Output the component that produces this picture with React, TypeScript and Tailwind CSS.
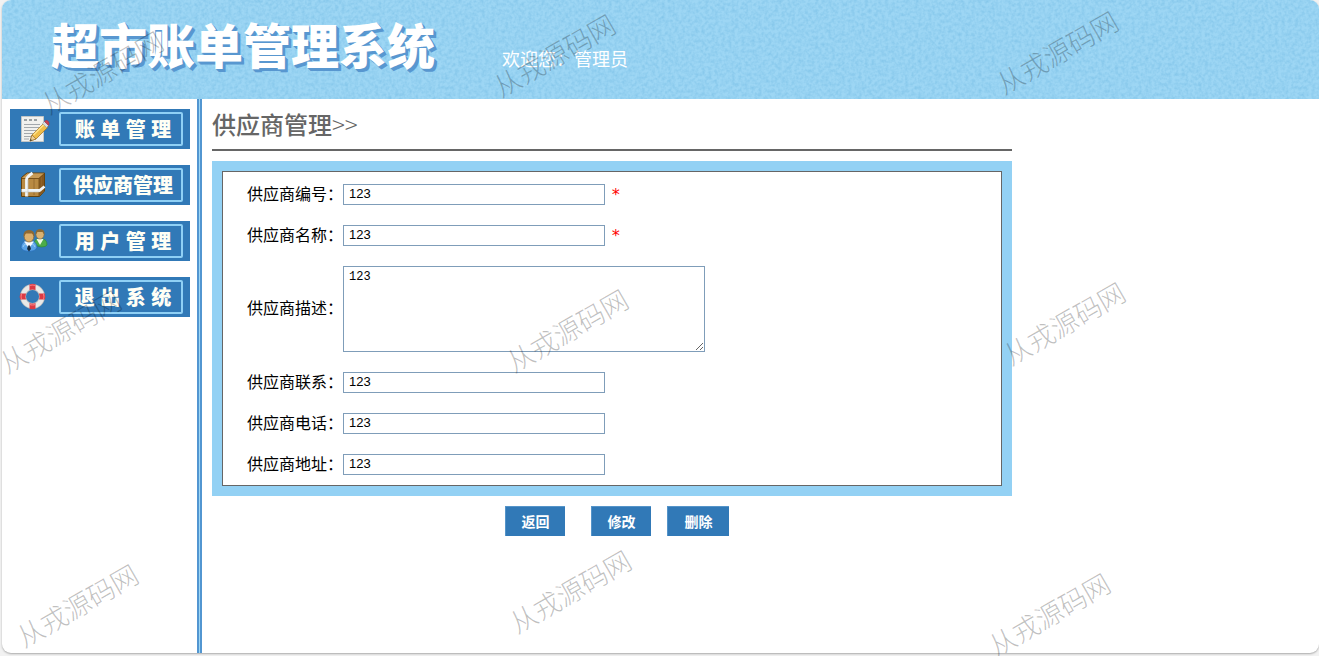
import { useState, type ReactNode } from "react";

function BillIcon() {
  return (
    <svg className="h-7 w-8 shrink-0" viewBox="0 0 32 28" aria-hidden="true">
      <path d="M2.5 1.5h22v25h-22z" fill="#f1f1ee" stroke="#c3c6c6" />
      <path d="M5 5h3M10 5h3M15 5h3" stroke="#7f868b" strokeWidth="1.6" />
      <path d="M5 9.5h16M5 12.5h16M5 15.5h13M5 18.5h10M5 21.5h7M5 24h5" stroke="#a3a8ac" />
      <path d="M11 26l2-6L24.500 8.500l4 4L17 24z" fill="#f0bd48" stroke="#a9782a" strokeWidth=".8" />
      <path d="M14.500 20L25.500 9" stroke="#ffe48c" strokeWidth="1.500" />
      <path d="M11 26l2-6 4 4z" fill="#edcf96" stroke="#8b6222" strokeWidth=".6" />
      <path d="M11 26l.7-2 1.300 1.300z" fill="#333" />
      <path d="M23.500 8.500l2-2 4 4-2 2z" fill="#d8dce0" stroke="#8795a2" strokeWidth=".5" />
      <path d="M25.500 6.500q1.500-2 3.500-.5 2 2 .5 4.500z" fill="#c8404f" stroke="#96344a" strokeWidth=".5" />
    </svg>
  );
}

function BoxIcon() {
  return (
    <svg className="h-7 w-8 shrink-0" viewBox="0 0 32 28" aria-hidden="true">
      <path d="M2.500 6.500L8 2h17.500v18l-5 5.500h-18z" fill="#a6752f" stroke="#62420f" />
      <path d="M3 7L8.200 2.500H25L20 7z" fill="#c69a56" />
      <path d="M3 7h17v18H3z" fill="#b98a42" />
      <path d="M20 7l5-4.500V20l-5 5z" fill="#85571f" />
      <path d="M3 7.500h17M20 7.500l5-4.500M20 7.500V25" fill="none" stroke="#7a5218" />
      <path d="M15 8v16M22.500 6v15" stroke="#91642b" strokeWidth=".8" />
      <path d="M7.500 25.500V8.500Q7.500 6 13.500 2M2.500 19.500h18l5-4" fill="none" stroke="#f1f5f7" strokeWidth="2.800" />
      <path d="M9 25.500V9M2.500 21h18" stroke="#bec4c7" strokeWidth=".6" />
    </svg>
  );
}

function UsersIcon() {
  return (
    <svg className="h-7 w-8 shrink-0" viewBox="0 0 32 28" aria-hidden="true">
      <path d="M15 18q0-6 4-6h4q5 0 5 6-1 2-6 2z" fill="#4cac48" stroke="#2b8a3a" strokeWidth=".7" />
      <path d="M17.500 12h7L21 18z" fill="#effbe6" />
      <ellipse cx="21" cy="7.500" rx="4" ry="4.600" fill="#d9b272" stroke="#8b6a35" strokeWidth=".6" />
      <path d="M16.500 8q-.5-6 4.500-6t4.500 6l-2-3h-5z" fill="#8a6a36" />
      <path d="M2 21q0-6 5-7h6q5 1 5 7-2 3.500-8 3.500T2 21z" fill="#5ba4e8" stroke="#2367b3" strokeWidth=".7" />
      <path d="M5 14.500l5 7 5-7z" fill="#f5faff" />
      <path d="M9 18.500h2l1 3.500-2 2.500L8 22z" fill="#172a3d" />
      <ellipse cx="10" cy="9.500" rx="4.800" ry="5.500" fill="#dcb06c" stroke="#8a6530" strokeWidth=".7" />
      <path d="M4.500 10Q4 3 10 3t5.500 7l-2.500-3.500H7z" fill="#8f6932" />
      <path d="M4 20q1-3 3-3M16 20q-1-3-3-3" stroke="#9acbf5" fill="none" />
    </svg>
  );
}

function LifebuoyIcon() {
  return (
    <svg className="h-7 w-8 shrink-0" viewBox="0 0 32 28" aria-hidden="true">
      <circle cx="13.500" cy="13.500" r="9.500" fill="none" stroke="#b7b9bb" strokeWidth="6" />
      <circle cx="13.500" cy="13.500" r="9.500" fill="none" stroke="#e9e9e7" strokeWidth="4.500" />
      <path d="M10.500 1.200q3-1 6 0V7q-3-1-6 0zM10.500 20q3 1 6 0v5.800q-3 1-6 0zM1.200 10.500q-1 3 0 6H7q-1-3 0-6zM20 10.500q1 3 0 6h5.800q1-3 0-6z" fill="#dc3a44" />
      <path d="M11 2.500q2.500-1 5 0M2.500 11q-1 2.500 0 5M24.500 11q1 2.500 0 5M11 21.500q2.500 1 5 0" fill="none" stroke="#f77c7f" strokeWidth="1.200" />
    </svg>
  );
}

const menu: { label: string; icon: ReactNode }[] = [
  { label: "账 单 管 理", icon: <BillIcon /> },
  { label: "供应商管理", icon: <BoxIcon /> },
  { label: "用 户 管 理", icon: <UsersIcon /> },
  { label: "退 出 系 统", icon: <LifebuoyIcon /> },
];

const fields = [
  { id: "code", label: "供应商编号：", required: true },
  { id: "name", label: "供应商名称：", required: true },
  { id: "description", label: "供应商描述：", multiline: true },
  { id: "contact", label: "供应商联系：" },
  { id: "phone", label: "供应商电话：" },
  { id: "address", label: "供应商地址：" },
];

const stamps = [
  "left-[102px] top-[72px]",
  "left-[554px] top-[55px]",
  "left-[1057px] top-[52px]",
  "left-[60px] top-[331px]",
  "left-[567px] top-[330px]",
  "left-[1064px] top-[323px]",
  "left-[77px] top-[605px]",
  "left-[570px] top-[591px]",
  "left-[1049px] top-[614px]",
];

function HeaderTexture() {
  return (
    <svg className="absolute inset-0 h-full w-full" aria-hidden="true">
      <filter id="paper" x="0" y="0" width="100%" height="100%" colorInterpolationFilters="sRGB">
        <feTurbulence type="fractalNoise" baseFrequency="0.3" numOctaves="2" seed="4" />
        <feColorMatrix values="0 0 0 0 0.4  0 0 0 0 0.7  0 0 0 0 0.87  0.8 0 0 0 -0.28" />
      </filter>
      <rect width="100%" height="100%" filter="url(#paper)" />
    </svg>
  );
}

function ActionButton({ children, wide = false }: { children: ReactNode; wide?: boolean }) {
  return (
    <button
      type="button"
      className={`h-[30px] border-t border-l border-[#5594c9] bg-[#3179b7] text-sm leading-5 font-bold text-white ${wide ? "w-[62px]" : "w-[60px]"}`}
    >
      {children}
    </button>
  );
}

export default function App() {
  const [values, setValues] = useState<Record<string, string>>(
    Object.fromEntries(fields.map((f) => [f.id, "123"])),
  );
  const update = (id: string, value: string) => setValues((v) => ({ ...v, [id]: value }));

  return (
    <div className="relative h-screen overflow-hidden bg-[#f2f2f2] pb-[3px] pl-0.5 font-['Liberation_Sans','Noto_Sans_CJK_SC',sans-serif]">
      <div className="flex h-full flex-col overflow-hidden rounded-[9px] bg-white shadow-[0_1px_2px_#aaaaaa]">
        <header className="relative flex h-[99px] shrink-0 items-start overflow-hidden bg-[#9dd6f4] pl-[49px]">
          <HeaderTexture />
          <h1 className="relative mt-3 text-[48px] leading-[72px] font-black whitespace-nowrap text-white [text-shadow:1px_1px_#5897d0,2px_2px_#5897d0,3px_3px_#5897d0]">
            超市账单管理系统
          </h1>
          <p className="relative mt-12 ml-[67px] text-lg leading-6 whitespace-nowrap text-white">
            欢迎您：管理员
          </p>
        </header>

        <div className="flex min-h-0 flex-1">
          <nav className="w-[195px] shrink-0 pt-2.5 pl-2">
            <ul className="flex flex-col gap-4">
              {menu.map((item) => (
                <li key={item.label}>
                  <a href="#" className="flex h-10 w-[180px] items-center bg-[#3179b7] pr-[7px] pl-[9px]">
                    {item.icon}
                    <span className="ml-2 flex h-[34px] flex-1 items-center justify-center rounded-xs border-2 border-[#8fd0f5] pt-0.5 pl-1 text-xl leading-5 font-black whitespace-nowrap text-[#fffff5]">
                      {item.label}
                    </span>
                  </a>
                </li>
              ))}
            </ul>
          </nav>
          <div className="w-[5px] shrink-0 border-x-2 border-[#5296d1] bg-[#9dd6f4]" />

          <main className="min-w-0 flex-1 pl-2.5">
            <div className="max-w-[800px]">
              <h2 className="h-[52px] border-b-2 border-[#666666] text-2xl leading-[50px] font-medium text-[#666666]">
                供应商管理<span className="font-['Noto_Sans_CJK_SC'] font-light">&gt;&gt;</span>
              </h2>
              <form onSubmit={(e) => e.preventDefault()}>
                <div className="mt-2.5 border-[10px] border-[#93d1f4]">
                  <div className="flex flex-col gap-5 border border-[#666666] pt-3 pb-2.5 pl-6">
                    {fields.map((f) => (
                      <div key={f.id} className="flex items-center text-base leading-5">
                        <label htmlFor={f.id} className="w-24 shrink-0 whitespace-nowrap text-black">
                          {f.label}
                        </label>
                        {f.multiline ? (
                          <textarea
                            id={f.id}
                            value={values[f.id]}
                            onChange={(e) => update(f.id, e.target.value)}
                            className="h-[86px] w-[362px] border border-[#7f9db9] px-[5px] py-0.5 font-['Liberation_Mono',monospace] text-xs leading-4 text-black"
                          />
                        ) : (
                          <input
                            id={f.id}
                            type="text"
                            required={f.required}
                            value={values[f.id]}
                            onChange={(e) => update(f.id, e.target.value)}
                            className="h-[21px] w-[262px] border border-[#7f9db9] px-[5px] pb-0.5 text-[13px] text-black"
                          />
                        )}
                        {f.required && (
                          <span className="ml-1.5 h-5 font-['DejaVu_Sans_Mono',monospace] text-base leading-5 text-[#ff0000]">
                            *
                          </span>
                        )}
                      </div>
                    ))}
                  </div>
                </div>
                <div className="mt-2.5 flex justify-center gap-4 pl-2.5">
                  <div className="mr-2.5 flex">
                    <ActionButton>返回</ActionButton>
                  </div>
                  <ActionButton>修改</ActionButton>
                  <ActionButton wide>删除</ActionButton>
                </div>
              </form>
            </div>
          </main>
        </div>
      </div>

      <div className="pointer-events-none absolute inset-0 overflow-hidden">
        {stamps.map((place) => (
          <span
            key={place}
            className={`absolute -translate-x-1/2 -translate-y-1/2 -rotate-30 font-['Noto_Sans_CJK_SC'] text-[27px] leading-8 font-light whitespace-nowrap text-black/25 ${place}`}
          >
            从戎源码网
          </span>
        ))}
      </div>
    </div>
  );
}
